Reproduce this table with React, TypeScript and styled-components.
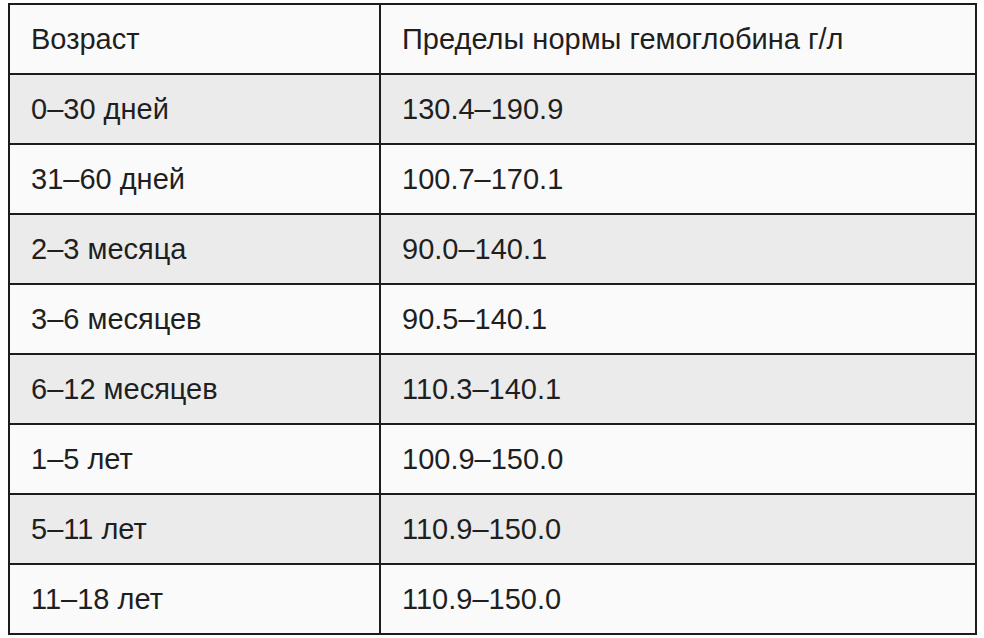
import React from "react";
import styled, { createGlobalStyle } from "styled-components";

const GlobalStyle = createGlobalStyle`
  html, body {
    margin: 0;
    padding: 0;
    background: #ffffff;
  }
  body {
    font-family: "Liberation Sans", Arial, sans-serif;
  }
`

const Page = styled.div`
  padding: 3px 0 0 8px;
`

const Table = styled.table`
  width: 969px;
  border-collapse: collapse;
  border: 2px solid #1c1c1c;
  table-layout: fixed;
`

const Row = styled.tr<{ $shaded: boolean }>`
  height: 70px;
  background-color: ${p => p.$shaded ? "#ebebeb" : "#fafafa"};
`

const Cell = styled.td`
  border: 2px solid #1c1c1c;
  padding: 0 0 0 21px;
  font-size: 29px;
  color: #1f1f1f;
  vertical-align: middle;
  white-space: nowrap;

  &:first-child {
    width: 348px;
  }
`

const rows: [string, string][] = [
    ["Возраст", "Пределы нормы гемоглобина г/л"],
    ["0–30 дней", "130.4–190.9"],
    ["31–60 дней", "100.7–170.1"],
    ["2–3 месяца", "90.0–140.1"],
    ["3–6 месяцев", "90.5–140.1"],
    ["6–12 месяцев", "110.3–140.1"],
    ["1–5 лет", "100.9–150.0"],
    ["5–11 лет", "110.9–150.0"],
    ["11–18 лет", "110.9–150.0"],
]

function App() {
    return (
        <>
            <GlobalStyle/>
            <Page>
                <Table>
                    <tbody>
                    {rows.map(([age, range], i) => (
                        <Row key={age} $shaded={i % 2 === 1}>
                            <Cell>{age}</Cell>
                            <Cell>{range}</Cell>
                        </Row>
                    ))}
                    </tbody>
                </Table>
            </Page>
        </>
    )
}

export default App
